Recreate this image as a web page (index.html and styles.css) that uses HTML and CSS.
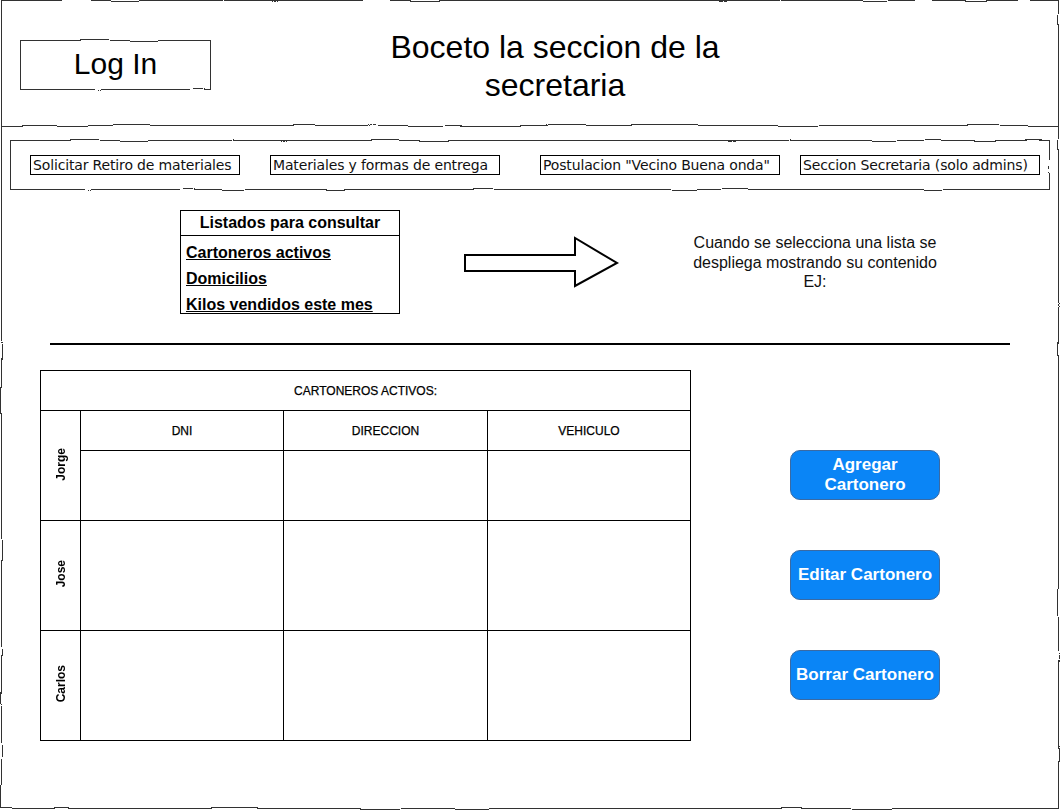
FILE: index.html
```html
<!DOCTYPE html>
<html lang="es">
<head>
<meta charset="utf-8">
<title>Boceto la seccion de la secretaria</title>
<link rel="stylesheet" href="styles.css">
</head>
<body>
<svg class="defs" width="0" height="0" aria-hidden="true">
  <filter id="rough" x="-5%" y="-5%" width="110%" height="110%">
    <feTurbulence type="fractalNoise" baseFrequency="0.02" numOctaves="1" seed="5" result="noise"/>
    <feDisplacementMap in="SourceGraphic" in2="noise" scale="4" xChannelSelector="R" yChannelSelector="G"/>
  </filter>
</svg>
<div class="page">
  <header class="top sketch">
    <div class="login sketch">Log In</div>
    <h1 class="title">Boceto la seccion de la<br>secretaria</h1>
  </header>
  <main class="main sketch sketch--open-top">
    <nav class="nav sketch">
      <a class="nav-item nav-item--a">Solicitar Retiro de materiales</a>
      <a class="nav-item nav-item--b">Materiales y formas de entrega</a>
      <a class="nav-item nav-item--c">Postulacion "Vecino Buena onda"</a>
      <a class="nav-item nav-item--d">Seccion Secretaria (solo admins)</a>
    </nav>

    <section class="lists-row">
      <div class="lists">
        <div class="lists-head">Listados para consultar</div>
        <ul class="lists-items">
          <li>Cartoneros activos</li>
          <li>Domicilios</li>
          <li>Kilos vendidos este mes</li>
        </ul>
      </div>
      <svg class="arrow" width="156" height="52" viewBox="0 0 156 52">
        <polygon points="1,19 111,19 111,2 153,27 111,50 111,35 1,35" fill="#fff" stroke="#000" stroke-width="2" stroke-linejoin="miter"/>
      </svg>
      <p class="note">Cuando se selecciona una lista se<br>despliega mostrando su contenido<br>EJ:</p>
    </section>

    <hr class="divider">

    <section class="data-row">
      <table class="grid">
        <colgroup>
          <col class="c-label"><col class="c-dni"><col class="c-dir"><col class="c-veh">
        </colgroup>
        <tr class="r-title"><th colspan="4">CARTONEROS ACTIVOS:</th></tr>
        <tr class="r-head">
          <td rowspan="2" class="label"><span>Jorge</span></td>
          <th>DNI</th><th>DIRECCION</th><th>VEHICULO</th>
        </tr>
        <tr class="r-first"><td></td><td></td><td></td></tr>
        <tr class="r-row">
          <td class="label"><span>Jose</span></td><td></td><td></td><td></td>
        </tr>
        <tr class="r-row">
          <td class="label"><span>Carlos</span></td><td></td><td></td><td></td>
        </tr>
      </table>
      <div class="actions">
        <button class="btn">Agregar<br>Cartonero</button>
        <button class="btn">Editar Cartonero</button>
        <button class="btn">Borrar Cartonero</button>
      </div>
    </section>
  </main>
</div>
</body>
</html>
```

FILE: styles.css
```css
* { box-sizing: border-box; }

html, body {
  margin: 0;
  padding: 0;
  background: #fff;
}

body {
  font-family: "Liberation Sans", Arial, sans-serif;
  color: #000;
}

.defs {
  position: absolute;
  width: 0;
  height: 0;
}

.page {
  width: 1061px;
  height: 811px;
  overflow: hidden;
}

/* hand-drawn border overlay */
.sketch {
  position: relative;
  border: 1px solid transparent;
}
.sketch::before {
  content: "";
  position: absolute;
  inset: -1px;
  border: 1px solid #333;
  filter: url(#rough);
  pointer-events: none;
}
.sketch--open-top::before {
  border-top: none;
}

/* header */
.top {
  height: 126px;
  margin: 0 2px 0 1px;
  display: flex;
  align-items: flex-start;
}

.login {
  margin: 39px 0 0 18px;
  width: 191px;
  height: 50px;
  display: flex;
  align-items: center;
  justify-content: center;
  font-size: 30px;
  padding-bottom: 2px;
}

.title {
  margin: 27px 0 0 144px;
  width: 400px;
  text-align: center;
  font-size: 32px;
  line-height: 38px;
  font-weight: normal;
}

/* main */
.main {
  display: flow-root;
  height: 683px;
  margin: 0 2px 0 1px;
  border-top: none;
}

.nav {
  margin: 14px 0 0 8px;
  width: 1040px;
  height: 50px;
  display: flex;
  align-items: center;
  padding-left: 19px;
}

.nav-item {
  display: block;
  height: 20px;
  border: 1px solid #000;
  font-family: "DejaVu Sans", Verdana, sans-serif;
  font-size: 14px;
  letter-spacing: -0.15px;
  line-height: 18px;
  padding-left: 2px;
  white-space: nowrap;
  color: #111;
}
.nav-item--a { width: 210px; }
.nav-item--b { width: 230px; margin-left: 30px; }
.nav-item--c { width: 240px; margin-left: 40px; }
.nav-item--d { width: 240px; margin-left: 20px; }

/* lists row */
.lists-row {
  display: flex;
  align-items: flex-start;
  margin-top: 20px;
  height: 104px;
}

.lists {
  margin-left: 178px;
  width: 220px;
  height: 104px;
  border: 1px solid #000;
}

.lists-head {
  height: 25px;
  border-bottom: 1px solid #000;
  text-align: center;
  font-weight: bold;
  font-size: 16px;
  line-height: 23px;
}

.lists-items {
  list-style: none;
  margin: 0;
  padding: 4px 0 0 5px;
}
.lists-items li {
  font-weight: bold;
  font-size: 16px;
  line-height: 26px;
  height: 26px;
  text-decoration: underline;
}

.arrow {
  display: block;
  margin: 26px 0 0 64px;
  flex: none;
}

.note {
  margin: 23px 0 0 70px;
  width: 250px;
  text-align: center;
  font-size: 16px;
  line-height: 19.5px;
  color: #111;
}

.divider {
  margin: 29px 0 0 48px;
  width: 960px;
  height: 2px;
  border: 0;
  background: #000;
}

/* table */
.data-row {
  display: flex;
  align-items: flex-start;
  margin-top: 25px;
}

.grid {
  margin-left: 38px;
  width: 651px;
  border-collapse: collapse;
  table-layout: fixed;
  border: 1px solid #000;
}
.c-label { width: 40px; }
.c-dni { width: 203px; }
.c-dir { width: 204px; }
.c-veh { width: 203px; }

.grid th, .grid td {
  border: 1px solid #000;
  padding: 0;
  font-size: 12px;
  text-align: center;
  vertical-align: middle;
}
.grid th {
  font-weight: normal;
  color: #000;
  -webkit-text-stroke: 0.25px #000;
}

.r-title th { height: 40px; }
.r-head th { height: 40px; }
.r-first td { height: 70px; }
.r-row td { height: 110px; }

.label span {
  display: inline-block;
  writing-mode: vertical-rl;
  transform: rotate(180deg);
  font-weight: bold;
  font-size: 12px;
  line-height: 14px;
}

/* buttons */
.actions {
  margin-left: 99px;
  padding-top: 80px;
  display: flex;
  flex-direction: column;
  gap: 50px;
}

.btn {
  width: 150px;
  height: 50px;
  border: 1px solid #3a6aa3;
  border-radius: 10px;
  background: #0a85f6;
  color: #fff;
  font-family: "Liberation Sans", Arial, sans-serif;
  font-weight: bold;
  font-size: 17px;
  line-height: 20px;
  padding: 0;
}
```
